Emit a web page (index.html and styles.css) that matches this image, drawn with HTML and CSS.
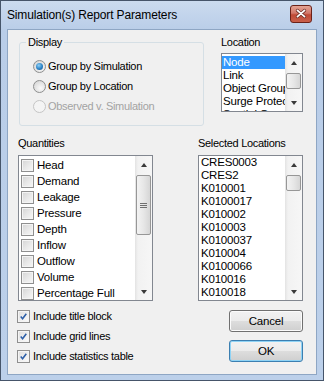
FILE: index.html
```html
<!DOCTYPE html>
<html>
  <head>
    <title>Simulation(s) Report Parameters</title>
    <link rel="stylesheet" href="styles.css">
  </head>
  <body>
    <div class="window">
      <header class="titlebar">
        <span class="title">Simulation(s) Report Parameters</span>
        <button class="close" aria-label="Close">
          <svg viewBox="0 0 22 18" width="22" height="18">
            <path d="M7 5 L15 12 M15 5 L7 12" stroke="#6a2a22" stroke-width="3.6" stroke-linecap="round" />
            <path d="M7 5 L15 12 M15 5 L7 12" stroke="#ffffff" stroke-width="2" stroke-linecap="round" />
          </svg>
        </button>
      </header>

      <main class="client">
        <div class="row top-row">
          <fieldset class="display">
            <legend>Display</legend>
            <label class="radio-row">
              <span class="radio checked"></span>
              Group by Simulation
            </label>
            <label class="radio-row">
              <span class="radio"></span>
              Group by Location
            </label>
            <label class="radio-row disabled">
              <span class="radio"></span>
              Observed v. Simulation
            </label>
          </fieldset>

          <section class="location">
            <p class="caption">Location</p>
            <div class="listbox loc-list">
              <ul class="items">
                <li class="selected">Node</li>
                <li>Link</li>
                <li>Object Group</li>
                <li>Surge Protection</li>
                <li>Spatial Group</li>
              </ul>
              <div class="vscroll">
                <span class="arrow up"></span>
                <div class="track"><span class="thumb small"></span></div>
                <span class="arrow down"></span>
              </div>
            </div>
          </section>
        </div>

        <div class="row mid-row">
          <section class="quantities">
            <p class="caption">Quantities</p>
            <div class="listbox qty-list">
              <ul class="items checks">
                <li><span class="check"></span>Head</li>
                <li><span class="check"></span>Demand</li>
                <li><span class="check"></span>Leakage</li>
                <li><span class="check"></span>Pressure</li>
                <li><span class="check"></span>Depth</li>
                <li><span class="check"></span>Inflow</li>
                <li><span class="check"></span>Outflow</li>
                <li><span class="check"></span>Volume</li>
                <li><span class="check"></span>Percentage Full</li>
              </ul>
              <div class="vscroll">
                <span class="arrow up"></span>
                <div class="track"><span class="thumb big"><i></i><i></i><i></i></span></div>
                <span class="arrow down"></span>
              </div>
            </div>
          </section>

          <section class="selected-locs">
            <p class="caption">Selected Locations</p>
            <div class="listbox sel-list">
              <ul class="items">
                <li>CRES0003</li>
                <li>CRES2</li>
                <li>K010001</li>
                <li>K0100017</li>
                <li>K010002</li>
                <li>K010003</li>
                <li>K0100037</li>
                <li>K010004</li>
                <li>K0100066</li>
                <li>K010016</li>
                <li>K010018</li>
              </ul>
              <div class="vscroll">
                <span class="arrow up"></span>
                <div class="track"><span class="thumb small"></span></div>
                <span class="arrow down"></span>
              </div>
            </div>
          </section>
        </div>

        <div class="row bottom-row">
          <div class="options">
            <label class="check-row">
              <span class="check on">
                <svg viewBox="0 0 13 13" width="13" height="13"><path d="M3.2 6.6 L5.4 9.2 L9.8 3.2" fill="none" stroke="#2d5fa8" stroke-width="1.8" /></svg>
              </span>
              Include title block
            </label>
            <label class="check-row">
              <span class="check on">
                <svg viewBox="0 0 13 13" width="13" height="13"><path d="M3.2 6.6 L5.4 9.2 L9.8 3.2" fill="none" stroke="#2d5fa8" stroke-width="1.8" /></svg>
              </span>
              Include grid lines
            </label>
            <label class="check-row">
              <span class="check on">
                <svg viewBox="0 0 13 13" width="13" height="13"><path d="M3.2 6.6 L5.4 9.2 L9.8 3.2" fill="none" stroke="#2d5fa8" stroke-width="1.8" /></svg>
              </span>
              Include statistics table
            </label>
          </div>
          <div class="buttons">
            <button class="btn">Cancel</button>
            <button class="btn default">OK</button>
          </div>
        </div>
      </main>
    </div>
  </body>
</html>
```

FILE: styles.css
```css
*,
*::after,
*::before {
  margin: 0;
  padding: 0;
  box-sizing: inherit;
}

html {
  box-sizing: border-box;
}

body {
  width: 324px;
  height: 381px;
  margin: 0;
  font-family: "Liberation Sans", Arial, sans-serif;
  font-size: 11px;
  letter-spacing: -0.3px;
  color: #000;
  background-color: #fff;
}

/* window frame */

.window {
  width: 324px;
  height: 381px;
  display: flex;
  flex-direction: column;
  border: 1px solid #46556a;
  padding: 0 6px 5px;
  background: linear-gradient(#cbdbef, #b9cde8 30px, #bcd0ea);
}

.titlebar {
  height: 28px;
  display: flex;
  align-items: center;
}

.title {
  font-size: 12px;
  letter-spacing: -0.15px;
  color: #000;
}

.close {
  margin-left: auto;
  margin-right: 5px;
  margin-top: -3px;
  width: 22px;
  height: 18px;
  border: 1px solid #6b2219;
  border-radius: 3px;
  background: linear-gradient(#e4a495, #d3786a 45%, #c04a36 55%, #c9604b);
  display: flex;
  align-items: center;
  justify-content: center;
}

.close svg {
  display: block;
  width: 20px;
  height: 16px;
}

.client {
  flex: 1;
  display: flex;
  flex-direction: column;
  border: 1px solid #8ea6c4;
  background-color: #f0f0f0;
  padding: 5px 13px 0 10px;
}

.row {
  display: flex;
  justify-content: space-between;
}

.caption {
  line-height: 14px;
  margin-bottom: 5px;
}

/* display group */

.display {
  width: 185px;
  margin-left: 1px;
  border: 1px solid #d5dfe5;
  border-radius: 3px;
  padding: 7px 0 9px 6px;
}

.display legend {
  line-height: 14px;
  padding: 0 2px;
}

.radio-row {
  height: 20px;
  display: flex;
  align-items: center;
  gap: 2px;
  margin-left: 7px;
}

.radio-row.disabled {
  color: #a3a3a3;
}

.radio {
  width: 13px;
  height: 13px;
  border-radius: 50%;
  border: 1px solid #8e8f8f;
  background: radial-gradient(circle at 60% 65%, #fafafa, #dcdcdc 70%, #cfcfcf);
  display: flex;
  align-items: center;
  justify-content: center;
}

.radio.checked::after {
  content: '';
  width: 7px;
  height: 7px;
  border-radius: 50%;
  background: radial-gradient(circle at 40% 35%, #8fd0f7, #2b83c6 55%, #1b4f86);
}

.disabled .radio {
  border-color: #c5c5c5;
  background: #f4f4f4;
}

/* location */

.location {
  width: 82px;
}

.location .caption {
  margin-bottom: 4px;
}

.listbox {
  display: flex;
  border: 1px solid #828790;
  background-color: #fff;
  overflow: hidden;
}

.items {
  flex: 1;
  list-style: none;
  overflow: hidden;
  min-width: 0;
}

.items li {
  height: 13px;
  line-height: 13px;
  padding-left: 2px;
  white-space: nowrap;
  font-size: 11.5px;
  letter-spacing: -0.2px;
}

.loc-list {
  height: 59px;
}

.loc-list .items {
  padding-top: 2px;
}

.loc-list .items li {
  padding-left: 1px;
}

.items li.selected {
  background-color: #3399ff;
  color: #fff;
}

/* scrollbars */

.vscroll {
  width: 17px;
  flex: none;
  display: flex;
  flex-direction: column;
  background: linear-gradient(90deg, #e3e3e3, #f2f2f2 3px, #f6f6f6);
}

.arrow {
  height: 17px;
  display: flex;
  align-items: center;
  justify-content: center;
}

.arrow::after {
  content: '';
  border-left: 3.5px solid transparent;
  border-right: 3.5px solid transparent;
}

.arrow.up::after {
  border-bottom: 4px solid #3a3a3a;
}

.arrow.down::after {
  border-top: 4px solid #3a3a3a;
}

.track {
  flex: 1;
  display: flex;
  flex-direction: column;
}

.thumb {
  margin: 0 1px;
  border: 1px solid #979797;
  border-radius: 2px;
  background: linear-gradient(90deg, #f3f3f3, #e7e7e7 50%, #d6d6d6);
  display: flex;
  flex-direction: column;
  align-items: center;
  justify-content: center;
  gap: 1px;
}

.thumb.small {
  height: 16px;
  margin-top: 2px;
}

.thumb.big {
  height: 60px;
  margin-top: 2px;
}

.thumb i {
  width: 7px;
  height: 1px;
  background-color: #6f6f6f;
}

/* quantities */

.mid-row {
  margin-top: 10px;
}

.quantities {
  width: 135px;
}

.qty-list {
  height: 146px;
}

.checks {
  padding-top: 1px;
}

.checks li {
  height: 16px;
  line-height: 16px;
  display: flex;
  align-items: center;
  gap: 3px;
  padding-left: 2px;
}

.check {
  width: 13px;
  height: 13px;
  flex: none;
  border: 1px solid #8f8f8f;
  background: linear-gradient(135deg, #d4d4d4, #ebebeb 60%, #f6f6f6);
  box-shadow: inset 0 0 0 1px #f4f4f4;
}

.check.on {
  background: linear-gradient(135deg, #dcdcdc, #f0f0f0 60%, #fbfbfb);
}

.check svg {
  display: block;
  width: 11px;
  height: 11px;
}

/* selected locations */

.selected-locs {
  width: 105px;
}

.sel-list {
  height: 146px;
}

/* bottom */

.bottom-row {
  margin-top: 5px;
}

.options {
  margin-left: -1px;
}

.check-row {
  height: 20px;
  display: flex;
  align-items: center;
  gap: 3px;
}

.buttons {
  width: 74px;
  display: flex;
  flex-direction: column;
  gap: 8px;
  padding-top: 4px;
}

.btn {
  height: 22px;
  font-family: inherit;
  font-size: 11.5px;
  letter-spacing: -0.2px;
  color: #000;
  border: 1px solid #707070;
  border-radius: 3px;
  background: linear-gradient(#f2f2f2, #ebebeb 50%, #dddddd 51%, #cfcfcf);
  box-shadow: inset 0 0 0 1px #fbfbfb;
}

.btn.default {
  border-color: #3c7fb1;
  box-shadow: inset 0 0 0 1px #8fd3f5;
}
```
